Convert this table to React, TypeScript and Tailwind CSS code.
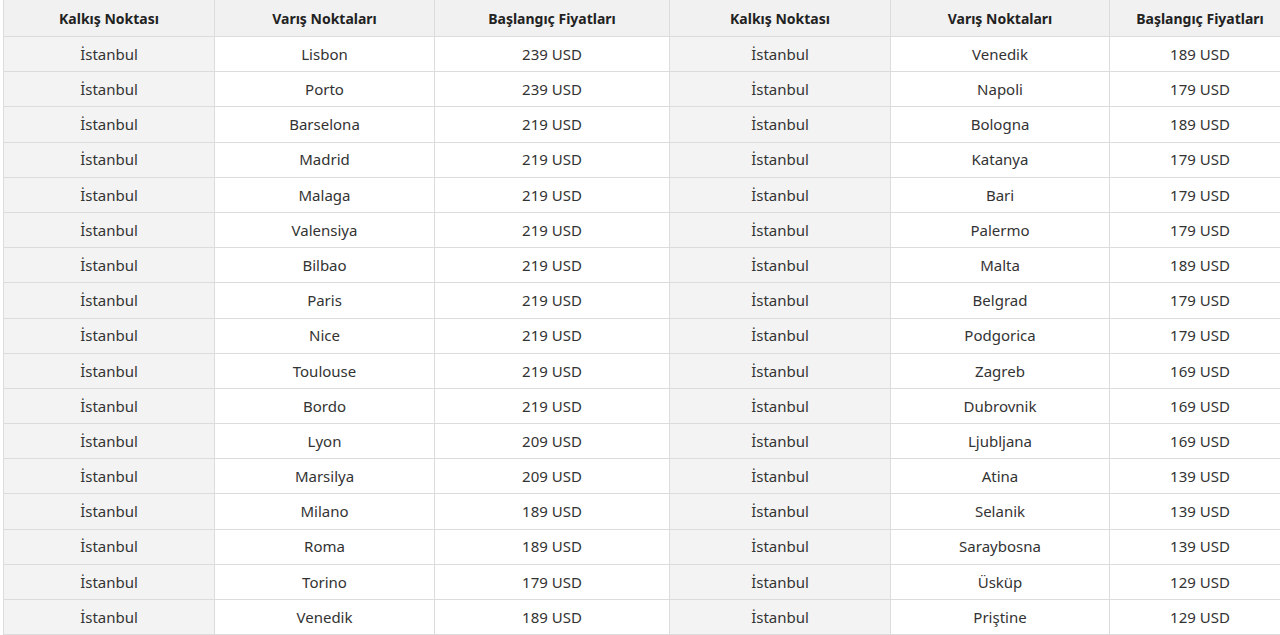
const leftRows: [string, string][] = [
    ['Lisbon', '239 USD'],
    ['Porto', '239 USD'],
    ['Barselona', '219 USD'],
    ['Madrid', '219 USD'],
    ['Malaga', '219 USD'],
    ['Valensiya', '219 USD'],
    ['Bilbao', '219 USD'],
    ['Paris', '219 USD'],
    ['Nice', '219 USD'],
    ['Toulouse', '219 USD'],
    ['Bordo', '219 USD'],
    ['Lyon', '209 USD'],
    ['Marsilya', '209 USD'],
    ['Milano', '189 USD'],
    ['Roma', '189 USD'],
    ['Torino', '179 USD'],
    ['Venedik', '189 USD'],
];

const rightRows: [string, string][] = [
    ['Venedik', '189 USD'],
    ['Napoli', '179 USD'],
    ['Bologna', '189 USD'],
    ['Katanya', '179 USD'],
    ['Bari', '179 USD'],
    ['Palermo', '179 USD'],
    ['Malta', '189 USD'],
    ['Belgrad', '179 USD'],
    ['Podgorica', '179 USD'],
    ['Zagreb', '169 USD'],
    ['Dubrovnik', '169 USD'],
    ['Ljubljana', '169 USD'],
    ['Atina', '139 USD'],
    ['Selanik', '139 USD'],
    ['Saraybosna', '139 USD'],
    ['Üsküp', '129 USD'],
    ['Priştine', '129 USD'],
];

const headers = ['Kalkış Noktası', 'Varış Noktaları', 'Başlangıç Fiyatları'];

export default function App() {
    return (
        <div className="w-[1280px] h-[635px] overflow-hidden bg-white" style={{ fontFamily: '"Noto Sans", "Open Sans", sans-serif' }}>
            <div className="ml-[3px] w-[1290px] grid grid-cols-[210px_219px_234px_220px_218px_180px] gap-px bg-[#dcdcdc] border-l border-b border-[#dcdcdc] text-[15px] text-[#333]">
                {[...headers, ...headers].map((h, i) => (
                    <div key={`h${i}`} className="h-[36px] flex items-center justify-center bg-[#f1f1f1] text-[14px] font-bold text-[#222]">
                        {h}
                    </div>
                ))}
                {leftRows.map((row, i) => {
                    const right = rightRows[i];
                    return [
                        <div key={`a${i}`} className="h-[34.2px] flex items-center justify-center bg-[#f3f3f3]">İstanbul</div>,
                        <div key={`b${i}`} className="h-[34.2px] flex items-center justify-center bg-white">{row[0]}</div>,
                        <div key={`c${i}`} className="h-[34.2px] flex items-center justify-center bg-white">{row[1]}</div>,
                        <div key={`d${i}`} className="h-[34.2px] flex items-center justify-center bg-[#f3f3f3]">İstanbul</div>,
                        <div key={`e${i}`} className="h-[34.2px] flex items-center justify-center bg-white">{right[0]}</div>,
                        <div key={`f${i}`} className="h-[34.2px] flex items-center justify-center bg-white">{right[1]}</div>,
                    ];
                })}
            </div>
        </div>
    );
}
